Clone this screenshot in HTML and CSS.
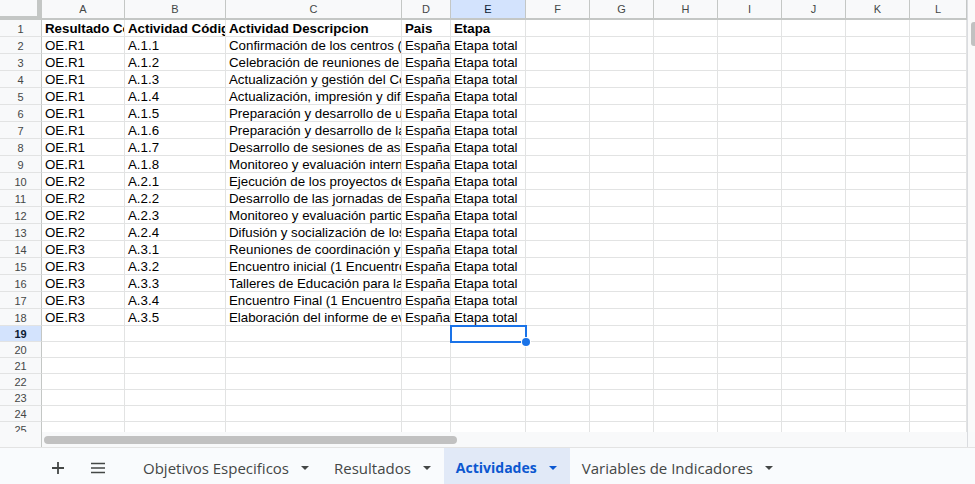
FILE: index.html
```html
<!DOCTYPE html>
<html lang="es">
<head>
  <meta charset="UTF-8">
  <meta name="viewport" content="width=device-width, initial-scale=1.0">
  <title>Actividades - Hoja de cálculo</title>
  <link rel="stylesheet" href="styles.css">
</head>
<body>
  <div class="sheet">
    <div class="grid-wrap">
      <div class="grid" id="grid"></div>
      <div class="selection"></div>
      <div class="selection-handle"></div>
    </div>
    <div class="vscroll"><div class="vthumb"></div></div>
  </div>

  <div class="hscroll">
    <div class="hgutter"></div>
    <div class="htrack"><div class="hthumb"></div></div>
  </div>

  <div class="tabbar">
    <button class="tab-btn" title="Añadir hoja">
      <svg width="14" height="14" viewBox="0 0 14 14"><path d="M7 1v12M1 7h12" stroke="#444746" stroke-width="1.8" fill="none"/></svg>
    </button>
    <button class="tab-btn" title="Todas las hojas">
      <svg width="16" height="12" viewBox="0 0 16 12"><path d="M1 1.5h14M1 6h14M1 10.5h14" stroke="#444746" stroke-width="1.6" fill="none"/></svg>
    </button>
    <div class="tabs">
      <div class="tab">Objetivos Especificos <span class="caret"></span></div>
      <div class="tab">Resultados <span class="caret"></span></div>
      <div class="tab active">Actividades <span class="caret"></span></div>
      <div class="tab">Variables de Indicadores <span class="caret"></span></div>
    </div>
  </div>

  <script>
    // datos de la hoja "Actividades"
    const cols = ['A', 'B', 'C', 'D', 'E', 'F', 'G', 'H', 'I', 'J', 'K', 'L'];
    const data = [
      ['Resultado Código', 'Actividad Código', 'Actividad Descripcion', 'Pais', 'Etapa'],
      ['OE.R1', 'A.1.1', 'Confirmación de los centros (educativos)', 'España', 'Etapa total'],
      ['OE.R1', 'A.1.2', 'Celebración de reuniones de coordinación', 'España', 'Etapa total'],
      ['OE.R1', 'A.1.3', 'Actualización y gestión del Convenio', 'España', 'Etapa total'],
      ['OE.R1', 'A.1.4', 'Actualización, impresión y difusión', 'España', 'Etapa total'],
      ['OE.R1', 'A.1.5', 'Preparación y desarrollo de unidades', 'España', 'Etapa total'],
      ['OE.R1', 'A.1.6', 'Preparación y desarrollo de las jornadas', 'España', 'Etapa total'],
      ['OE.R1', 'A.1.7', 'Desarrollo de sesiones de asesoramiento', 'España', 'Etapa total'],
      ['OE.R1', 'A.1.8', 'Monitoreo y evaluación interna', 'España', 'Etapa total'],
      ['OE.R2', 'A.2.1', 'Ejecución de los proyectos de centro', 'España', 'Etapa total'],
      ['OE.R2', 'A.2.2', 'Desarrollo de las jornadas de intercambio', 'España', 'Etapa total'],
      ['OE.R2', 'A.2.3', 'Monitoreo y evaluación participativa', 'España', 'Etapa total'],
      ['OE.R2', 'A.2.4', 'Difusión y socialización de los resultados', 'España', 'Etapa total'],
      ['OE.R3', 'A.3.1', 'Reuniones de coordinación y seguimiento', 'España', 'Etapa total'],
      ['OE.R3', 'A.3.2', 'Encuentro inicial (1 Encuentro)', 'España', 'Etapa total'],
      ['OE.R3', 'A.3.3', 'Talleres de Educación para la Ciudadanía', 'España', 'Etapa total'],
      ['OE.R3', 'A.3.4', 'Encuentro Final (1 Encuentro)', 'España', 'Etapa total'],
      ['OE.R3', 'A.3.5', 'Elaboración del informe de evaluación', 'España', 'Etapa total']
    ];
    const selectedCol = 'E';
    const selectedRow = 19;
    const totalRows = 25;

    const grid = document.getElementById('grid');

    function makeCell(cls, text) {
      const el = document.createElement('div');
      el.className = cls;
      el.textContent = text || '';
      return el;
    }

    // cabecera de columnas
    const head = document.createElement('div');
    head.className = 'row col-head';
    head.appendChild(makeCell('corner'));
    cols.forEach(c => {
      head.appendChild(makeCell('ch' + (c === selectedCol ? ' sel' : ''), c));
    });
    grid.appendChild(head);

    // filas
    for (let r = 1; r <= totalRows; r++) {
      const values = data[r - 1];
      const row = document.createElement('div');
      row.className = 'row' + (values ? '' : ' empty') + (r === 1 ? ' bold' : '');
      row.appendChild(makeCell('rh' + (r === selectedRow ? ' sel' : ''), r));
      cols.forEach((c, i) => {
        row.appendChild(makeCell('cell', values ? values[i] : ''));
      });
      grid.appendChild(row);
    }
  </script>
</body>
</html>
```

FILE: styles.css
```css
body {
  margin: 0;
  width: 975px;
  height: 484px;
  overflow: hidden;
  background: #fff;
  font-family: 'Liberation Sans', Arial, sans-serif;
  color: #000;
}

.sheet {
  display: flex;
  height: 432px;
  overflow: hidden;
}

.grid-wrap {
  position: relative;
  width: 967px;
  flex-shrink: 0;
  overflow: hidden;
}

/* cabecera de filas + columnas A..L */
.row {
  display: grid;
  grid-template-columns: 42px 83px 101px 176px 49px 75px 64px 64px 64px 64px 64px 64px 57px;
  height: 17px;
}

.row.empty {
  height: 16px;
}

.row.bold .cell {
  font-weight: bold;
}

.cell,
.rh,
.ch,
.corner {
  box-sizing: border-box;
  border-right: 1px solid #e2e3e3;
  border-bottom: 1px solid #e2e3e3;
  white-space: nowrap;
}

.cell {
  overflow: hidden;
  padding: 1px 2px 0 3px;
  font-size: 13.3px;
  line-height: 16px;
}

.rh {
  display: flex;
  align-items: center;
  justify-content: center;
  padding-top: 1px;
  background: #f8f9fa;
  border-right-color: #c4c7c5;
  font-size: 11px;
  color: #444746;
}

.rh.sel {
  background: #d3e3fd;
  color: #0b1a33;
  font-weight: bold;
}

.row.col-head {
  height: 20px;
}

.ch {
  display: flex;
  align-items: center;
  justify-content: center;
  background: #f8f9fa;
  border-right-color: #c4c7c5;
  border-bottom: 2px solid #c4c7c5;
  font-size: 11px;
  color: #444746;
}

.ch.sel {
  background: #d3e3fd;
  color: #0b1a33;
}

.corner {
  background: #f8f9fa;
  border-right: 5px solid #c4c7c5;
  border-bottom: 4px solid #c4c7c5;
}

.selection {
  position: absolute;
  left: 450px;
  top: 325px;
  width: 77px;
  height: 18px;
  box-sizing: border-box;
  border: 2px solid #1a73e8;
}

.selection-handle {
  position: absolute;
  left: 522px;
  top: 338px;
  width: 8px;
  height: 8px;
  box-sizing: border-box;
  border-radius: 50%;
  background: #1a73e8;
  box-shadow: 0 0 0 1px #fff;
}

.vscroll {
  width: 8px;
  flex-shrink: 0;
  box-sizing: border-box;
  border-left: 1px solid #dadce0;
  background: #fafafa;
  padding-top: 22px;
}

.vthumb {
  margin-left: 3px;
  width: 6px;
  height: 24px;
  border-radius: 4px;
  background: #c1c1c1;
}

.hscroll {
  display: flex;
  height: 15px;
  background: #f8f9fa;
  border-bottom: 1px solid #e3e3e3;
}

.hgutter {
  width: 42px;
  box-sizing: border-box;
  border-right: 1px solid #c4c7c5;
}

.htrack {
  flex: 1;
  padding: 4px 0 0 2px;
  border-right: 1px solid #dadce0;
  margin-right: 7px;
}

.hthumb {
  width: 413px;
  height: 8px;
  border-radius: 4px;
  background: #c1c1c1;
}

.tabbar {
  display: flex;
  align-items: stretch;
  height: 36px;
  padding-left: 38px;
  background: #f9fbfd;
}

.tab-btn {
  width: 40px;
  border: none;
  background: none;
  padding: 4px 0 0;
  display: flex;
  align-items: center;
  justify-content: center;
  cursor: pointer;
}

.tabs {
  display: flex;
  margin-left: 13px;
}

.tab {
  display: flex;
  align-items: center;
  gap: 12px;
  padding: 3px 13px 0 12px;
  font-family: 'Open Sans', Roboto, sans-serif;
  font-size: 15px;
  font-weight: 500;
  color: #444746;
  cursor: pointer;
}

.tab.active {
  background: #e1e9f7;
  color: #0b57d0;
  font-size: 14px;
  font-weight: 700;
}

.caret {
  width: 0;
  height: 0;
  border-left: 4px solid transparent;
  border-right: 4px solid transparent;
  border-top: 4px solid currentColor;
}
```
